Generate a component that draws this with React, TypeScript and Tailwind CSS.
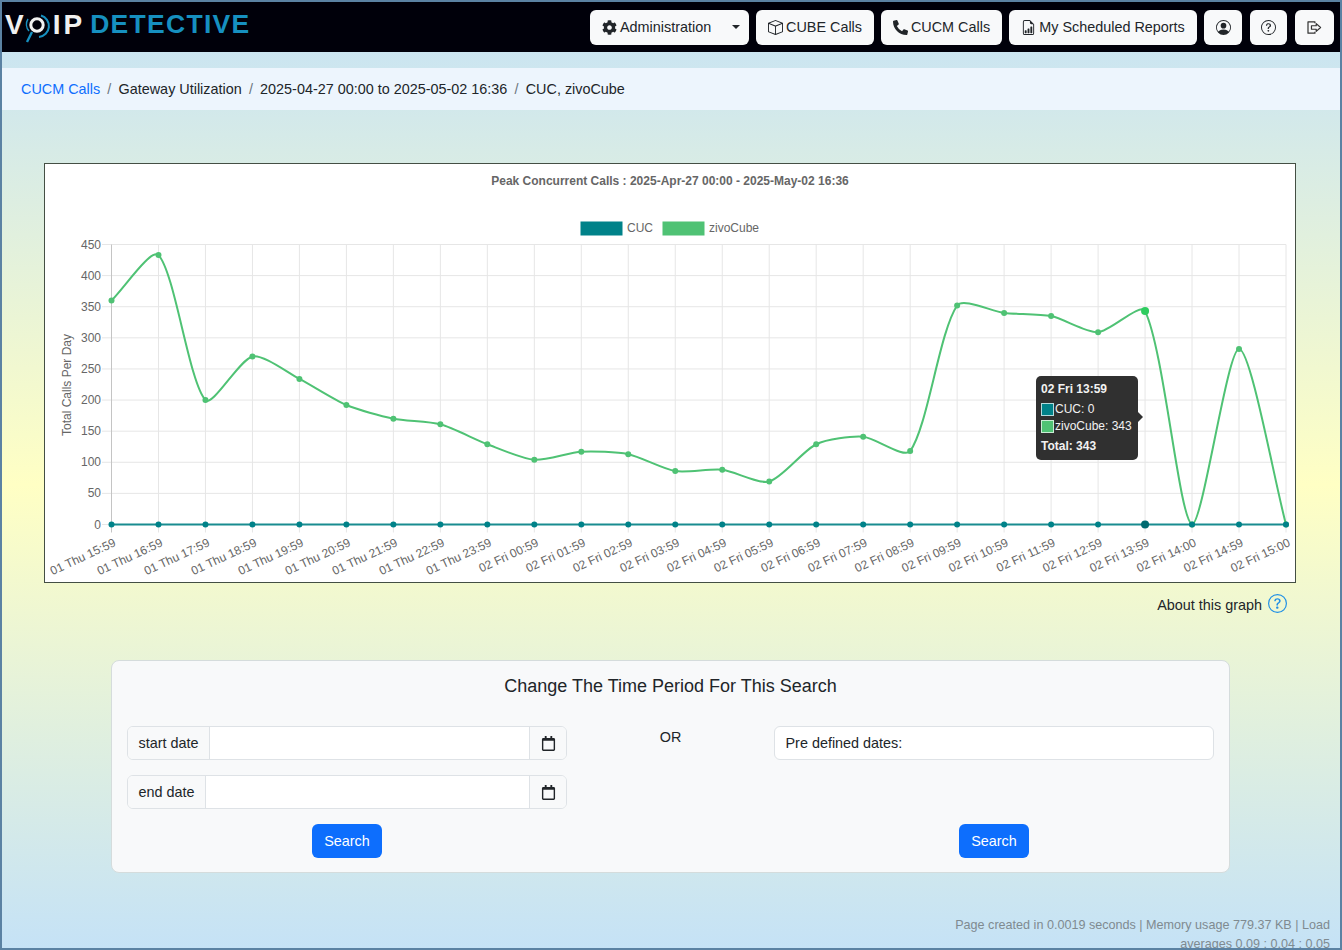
import React from 'react';
import { FaCog, FaPhoneAlt, FaRegCalendar } from 'react-icons/fa';
import { BsBox, BsFileEarmarkBarGraph, BsPersonCircle, BsQuestionCircle } from 'react-icons/bs';

const LABELS = [
  '01 Thu 15:59', '01 Thu 16:59', '01 Thu 17:59', '01 Thu 18:59', '01 Thu 19:59', '01 Thu 20:59', '01 Thu 21:59',
  '01 Thu 22:59', '01 Thu 23:59', '02 Fri 00:59', '02 Fri 01:59', '02 Fri 02:59', '02 Fri 03:59', '02 Fri 04:59',
  '02 Fri 05:59', '02 Fri 06:59', '02 Fri 07:59', '02 Fri 08:59', '02 Fri 09:59', '02 Fri 10:59', '02 Fri 11:59',
  '02 Fri 12:59', '02 Fri 13:59', '02 Fri 14:00', '02 Fri 14:59', '02 Fri 15:00',
];
const VALUES = [360, 433, 200, 270, 234, 192, 170, 161, 129, 104, 117, 113, 86, 88, 69, 129, 141, 118, 352, 340, 335, 309, 343, 0, 282, 0];

// chart coordinates are relative to the chart box
const X0 = 66.5;
const STEP = 46.98;
const Y0 = 360.5;
const UNIT = 280 / 450;
const TENSION = 0.25;
const px = (i: number) => X0 + i * STEP;
const py = (v: number) => Y0 - v * UNIT;

// chart.js bezier spline with a low tension
function spline(values: number[]) {
  const pts = values.map((v, i) => ({ x: px(i), y: py(v) }));
  const ctrl = (i: number) => {
    const p = pts[Math.max(i - 1, 0)];
    const c = pts[i];
    const n = pts[Math.min(i + 1, pts.length - 1)];
    const d01 = Math.hypot(c.x - p.x, c.y - p.y);
    const d12 = Math.hypot(n.x - c.x, n.y - c.y);
    const total = d01 + d12 || 1;
    const fa = (TENSION * d01) / total;
    const fb = (TENSION * d12) / total;
    return {
      in: { x: c.x - fa * (n.x - p.x), y: Math.min(c.y - fa * (n.y - p.y), Y0) },
      out: { x: c.x + fb * (n.x - p.x), y: Math.min(c.y + fb * (n.y - p.y), Y0) },
    };
  };
  let d = `M${pts[0].x} ${pts[0].y}`;
  for (let i = 1; i < pts.length; i++) {
    const a = ctrl(i - 1).out;
    const b = ctrl(i).in;
    d += ` C${a.x} ${a.y} ${b.x} ${b.y} ${pts[i].x} ${pts[i].y}`;
  }
  return d;
}

const Chart: React.FC = () => (
  <svg width="1250" height="418" viewBox="0 0 1250 418" className="block" fontFamily="'Liberation Sans', Arial, sans-serif">
    <text x="625" y="21" textAnchor="middle" fontSize="12" fontWeight="700" fill="#666">
      Peak Concurrent Calls : 2025-Apr-27 00:00 - 2025-May-02 16:36
    </text>

    <rect x="535.5" y="57.5" width="42" height="14" fill="#008289" />
    <text x="582" y="68" fontSize="12" fill="#666">CUC</text>
    <rect x="617.5" y="57.5" width="42" height="14" fill="#4fc274" />
    <text x="664" y="68" fontSize="12" fill="#666">zivoCube</text>

    {[0, 50, 100, 150, 200, 250, 300, 350, 400, 450].map(v => (
      <g key={v}>
        <line x1="57" x2="1241" y1={py(v)} y2={py(v)} stroke="#e6e6e6" />
        <text x="56" y={py(v) + 4} textAnchor="end" fontSize="12" fill="#666">{v}</text>
      </g>
    ))}
    {LABELS.map((l, i) => (
      <g key={l}>
        <line x1={px(i)} x2={px(i)} y1={Y0 - 280} y2={Y0 + 8} stroke={i === 0 ? '#c4c4c4' : '#e6e6e6'} />
        <text
          x={px(i) + 5}
          y={Y0 + 21}
          textAnchor="end"
          fontSize="12"
          fill="#666"
          transform={`rotate(-25 ${px(i) + 5} ${Y0 + 21})`}
        >
          {l}
        </text>
      </g>
    ))}
    <text x="0" y="0" fontSize="12" fill="#666" textAnchor="middle" transform="translate(25.5 221) rotate(-90)">
      Total Calls Per Day
    </text>

    <path d={spline(VALUES)} fill="none" stroke="#4fc274" strokeWidth="2" />
    {VALUES.map((v, i) => (
      <circle key={i} cx={px(i)} cy={py(v)} r={i === 22 ? 4 : 3} fill={i === 22 ? '#2ecc5f' : '#4fc274'} />
    ))}
    <line x1={px(0)} x2={px(25)} y1={Y0} y2={Y0} stroke="#198c90" strokeWidth="2" />
    {VALUES.map((_, i) => (
      <circle key={i} cx={px(i)} cy={Y0} r={i === 22 ? 4 : 3} fill={i === 22 ? '#006a70' : '#008289'} />
    ))}
  </svg>
);

const ChartTooltip: React.FC = () => (
  <div className="absolute left-[991px] top-[212px] w-[102px] h-[84px] rounded-[5px] bg-[#303030] pl-[5px] pt-[5px] text-[12px] leading-[17px] text-[#f2f2f2]">
    <div className="font-bold">02 Fri 13:59</div>
    <div className="mt-[3px] flex items-center">
      <span className="w-[13px] h-[13px] mr-[1px] bg-[#008289] border border-white/70" />
      CUC: 0
    </div>
    <div className="flex items-center">
      <span className="w-[13px] h-[13px] mr-[1px] bg-[#4fc274] border border-white/70" />
      zivoCube: 343
    </div>
    <div className="mt-[3px] font-bold">Total: 343</div>
    <span className="absolute right-[-5px] top-[36px] w-0 h-0 border-y-[5px] border-y-transparent border-l-[5px] border-l-[#303030]" />
  </div>
);

const NavButton: React.FC<{ className?: string; children: React.ReactNode }> = ({ className, children }) => (
  <button className={`h-[35px] rounded-[6px] bg-[#f8f9fa] text-[#212529] text-[14.4px] flex items-center justify-center gap-[3px] ${className ?? ''}`}>
    {children}
  </button>
);

const Label: React.FC<{ children: React.ReactNode }> = ({ children }) => <span className="mt-[2px]">{children}</span>;

const DateRow: React.FC<{ label: string; labelWidth: string }> = ({ label, labelWidth }) => (
  <div className="flex h-[34px] w-[440px] rounded-[6px] border border-[#dee2e6] overflow-hidden bg-white">
    <div className={`${labelWidth} bg-[#f8f9fa] border-r border-[#dee2e6] flex items-center justify-center`}>
      <Label>{label}</Label>
    </div>
    <div className="flex-1" />
    <div className="w-[37px] bg-[#f8f9fa] border-l border-[#dee2e6] flex items-center justify-center">
      <FaRegCalendar size={15} className="text-[#212529]" />
    </div>
  </div>
);

const SearchButton: React.FC = () => (
  <button className="w-[70px] h-[34px] rounded-[6px] bg-[#0d6efd] text-white text-[14.4px] pt-[2px]">Search</button>
);

const Logo: React.FC = () => (
  <div className="pl-[3px] flex items-center font-bold leading-none mb-[5px]">
    <span className="text-[28px] text-[#f0f0f0]">V</span>
    <svg width="28" height="32" viewBox="0 0 28 32" className="ml-[-1px] mr-[2px] mt-[9px]">
      <circle cx="14" cy="12" r="6.2" fill="none" stroke="#f0f0f0" strokeWidth="3" />
      <path d="M18 2.5 A11 11 0 0 1 16 24" fill="none" stroke="#1690c0" strokeWidth="2" />
      <path d="M5 6 A10 10 0 0 0 6 18" fill="none" stroke="#1690c0" strokeWidth="1.5" />
      <path d="M9 19 L4 29" fill="none" stroke="#1690c0" strokeWidth="2.4" />
    </svg>
    <span className="text-[28px] text-[#f0f0f0] tracking-[3px]">IP</span>
    <span className="ml-[5px] text-[26.5px] tracking-[1.3px] text-[#1690c0]">DETECTIVE</span>
  </div>
);

const ExitIcon: React.FC = () => (
  <svg width="15" height="13" viewBox="0 0 17 15" fill="none" stroke="#333" strokeWidth="1.4" strokeLinejoin="round">
    <path d="M9 2.5 V1 H1 V14 H9 V12.5" />
    <path d="M5 5.5 H10.5 V3 L15.5 7.5 L10.5 12 V9.5 H5 Z" />
  </svg>
);

export default function App() {
  return (
    <div className="h-[950px] overflow-hidden border-2 border-[#5b82a3] font-['Liberation_Sans',Arial,sans-serif] text-[#212529] text-[14.4px] bg-[linear-gradient(to_bottom,#c5e2f6_0%,#ffffc4_51%,#c5e2f6_100%)]">
      {/* Header */}
      <div className="h-[50px] bg-[#00000a] flex items-center justify-between pr-[6px]">
        <Logo />
        <div className="flex items-center">
          <NavButton className="w-[159px] justify-start pl-[12px]">
            <FaCog size={15} />
            <Label>Administration</Label>
            <span className="ml-[18px] w-0 h-0 border-x-[4px] border-x-transparent border-t-[4px] border-t-[#212529]" />
          </NavButton>
          <NavButton className="ml-[7px] w-[118px]"><BsBox size={15} /><Label>CUBE Calls</Label></NavButton>
          <NavButton className="ml-[7px] w-[121px]"><FaPhoneAlt size={15} /><Label>CUCM Calls</Label></NavButton>
          <NavButton className="ml-[7px] w-[188px]"><BsFileEarmarkBarGraph size={15} /><Label>My Scheduled Reports</Label></NavButton>
          <NavButton className="ml-[7px] w-[38px]"><BsPersonCircle size={15} /></NavButton>
          <NavButton className="ml-[8px] w-[37px]"><BsQuestionCircle size={15} /></NavButton>
          <NavButton className="ml-[8px] w-[39px]"><ExitIcon /></NavButton>
        </div>
      </div>

      {/* Breadcrumb */}
      <div className="mt-[16px] h-[42px] bg-[#edf5fd] pl-[19px] pt-[2px] flex items-center">
        <span className="text-[#0d6efd]">CUCM Calls</span>
        <span className="px-[7.2px] text-[#6c757d]">/</span>
        <span>Gateway Utilization</span>
        <span className="px-[7.2px] text-[#6c757d]">/</span>
        <span>2025-04-27 00:00 to 2025-05-02 16:36</span>
        <span className="px-[7.2px] text-[#6c757d]">/</span>
        <span>CUC, zivoCube</span>
      </div>

      {/* Chart */}
      <div className="relative mt-[53px] mx-[42px] w-[1252px] h-[420px] border border-[#444f44] bg-white">
        <Chart />
        <ChartTooltip />
      </div>

      <div className="mt-[11px] pr-[53px] flex items-center justify-end gap-[6px] h-[20px]">
        <span className="mt-[3px]">About this graph</span>
        <BsQuestionCircle size={19} className="text-[#1f8fe6] mb-[1px]" />
      </div>

      {/* Time period */}
      <div className="mt-[46px] ml-[109px] w-[1119px] h-[213px] rounded-[8px] border border-[#d5dcdc] bg-[#f8f9fa] px-[15px] pt-[13px]">
        <div className="text-center text-[18px] leading-[24px]">Change The Time Period For This Search</div>
        <div className="mt-[28px] flex justify-between">
          <div className="flex flex-col items-center gap-[15px]">
            <DateRow label="start date" labelWidth="w-[82px]" />
            <DateRow label="end date" labelWidth="w-[78px]" />
            <SearchButton />
          </div>
          <div className="mt-[1px] leading-[20px]">OR</div>
          <div className="flex flex-col items-center">
            <div className="w-[440px] h-[34px] rounded-[6px] border border-[#dee2e6] bg-white pl-[10.5px] pt-[2px] flex items-center">Pre defined dates:</div>
            <div className="mt-[64px]"><SearchButton /></div>
          </div>
        </div>
      </div>

      {/* Footer */}
      <div className="mt-[43px] ml-auto w-[390px] pr-[10px] text-right text-[12.6px] text-[#7f8a90] leading-[19px]">
        Page created in 0.0019 seconds | Memory usage 779.37 KB | Load averages 0.09 : 0.04 : 0.05
      </div>
    </div>
  );
}
